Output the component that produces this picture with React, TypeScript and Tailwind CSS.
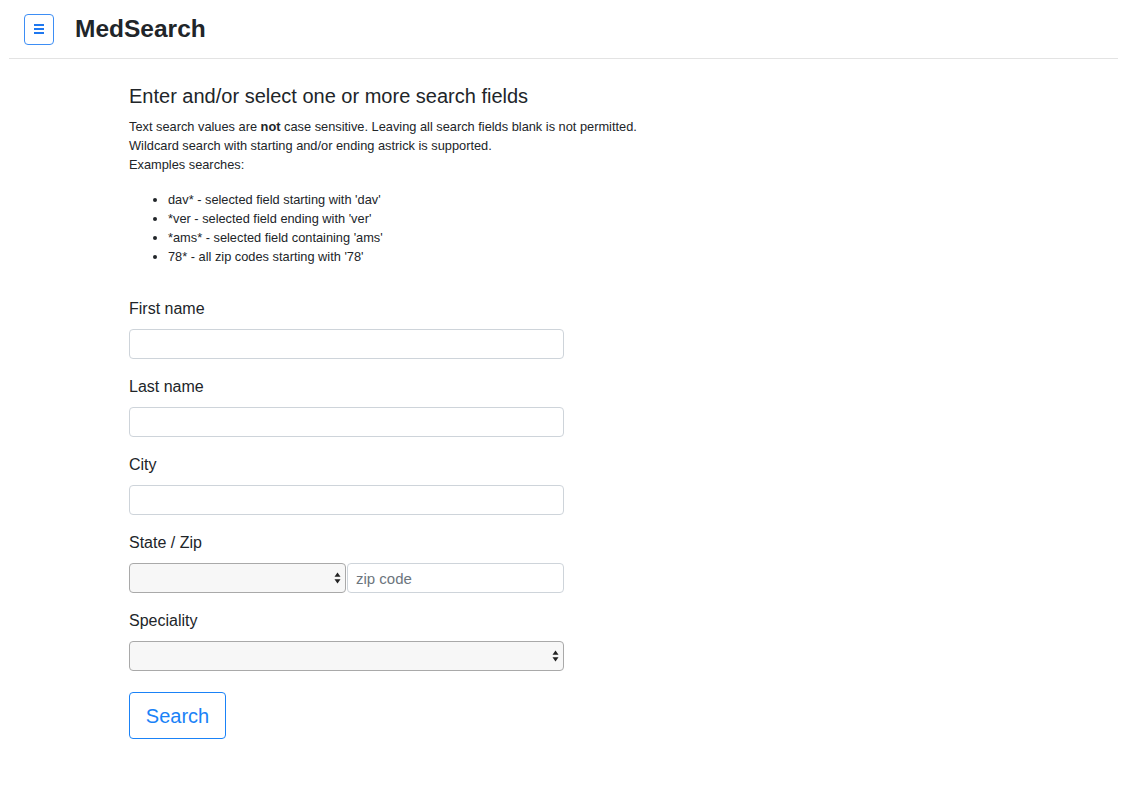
import React from "react";

const font = { fontFamily: '"Liberation Sans", Arial, sans-serif' };

function Arrows() {
  return (
    <svg width="7" height="12" viewBox="0 0 7 12" className="pointer-events-none absolute right-[4px] top-1/2 -translate-y-1/2">
      <path d="M3.5 0.5 L6.5 4.8 H0.5 Z" fill="#222" />
      <path d="M3.5 11.5 L6.5 7.2 H0.5 Z" fill="#222" />
    </svg>
  );
}

function Field({ label, children }: { label: string; children: React.ReactNode }) {
  return (
    <div className="mb-[18px]">
      <div className="mb-[10px] text-[16px] leading-[20px] text-[#212529]">{label}</div>
      {children}
    </div>
  );
}

const inputCls =
  "block h-[30px] w-full rounded-[4px] border border-[#ced4da] bg-white px-[8px] text-[14px] text-[#495057] outline-none placeholder:text-[#6c757d]";

function SelectBox({ className = "" }: { className?: string }) {
  return (
    <div className={`relative h-[30px] rounded-[4px] border border-[#a9a9a9] bg-[#f7f7f7] ${className}`}>
      <Arrows />
    </div>
  );
}

export default function App() {
  return (
    <div className="min-h-[795px] bg-white text-[#212529]" style={font}>
      <header className="ml-[9px] mr-[22px] flex h-[59px] items-center border-b border-[#e3e3e3]">
        <button
          type="button"
          className="ml-[15px] flex h-[31px] w-[30px] flex-col items-center justify-center gap-[2.5px] rounded-[4px] border border-[#3d8ef5]"
        >
          <span className="block h-[1.5px] w-[10px] bg-[#1f78f0]" />
          <span className="block h-[1.5px] w-[10px] bg-[#1f78f0]" />
          <span className="block h-[1.5px] w-[10px] bg-[#1f78f0]" />
        </button>
        <h1 className="ml-[21px] text-[24.5px] font-bold leading-none text-[#212529]">MedSearch</h1>
      </header>

      <main className="ml-[129px] w-[435px] pt-[25px]">
        <h2 className="whitespace-nowrap text-[20px] leading-[24px] text-[#212529]">
          Enter and/or select one or more search fields
        </h2>
        <div className="mt-[9px] whitespace-nowrap text-[12.8px] leading-[19px]">
          <p>
            Text search values are <b>not</b> case sensitive. Leaving all search fields blank is not permitted.
          </p>
          <p>Wildcard search with starting and/or ending astrick is supported.</p>
          <p>Examples searches:</p>
          <ul className="mt-[16px] list-disc pl-[39px]">
            <li>dav* - selected field starting with 'dav'</li>
            <li>*ver - selected field ending with 'ver'</li>
            <li>*ams* - selected field containing 'ams'</li>
            <li>78* - all zip codes starting with '78'</li>
          </ul>
        </div>

        <div className="mt-[33px]">
          <Field label="First name">
            <input className={inputCls} />
          </Field>
          <Field label="Last name">
            <input className={inputCls} />
          </Field>
          <Field label="City">
            <input className={inputCls} />
          </Field>
          <Field label="State / Zip">
            <div className="flex">
              <SelectBox className="w-[217px]" />
              <input className={`${inputCls} ml-[1px] flex-1 text-[15px]`} placeholder="zip code" />
            </div>
          </Field>
          <Field label="Speciality">
            <SelectBox className="w-full" />
          </Field>
          <button
            type="button"
            className="mt-[3px] h-[47px] w-[97px] rounded-[4px] border border-[#1a82f7] text-[20px] text-[#1a82f7]"
          >
            Search
          </button>
        </div>
      </main>
    </div>
  );
}
